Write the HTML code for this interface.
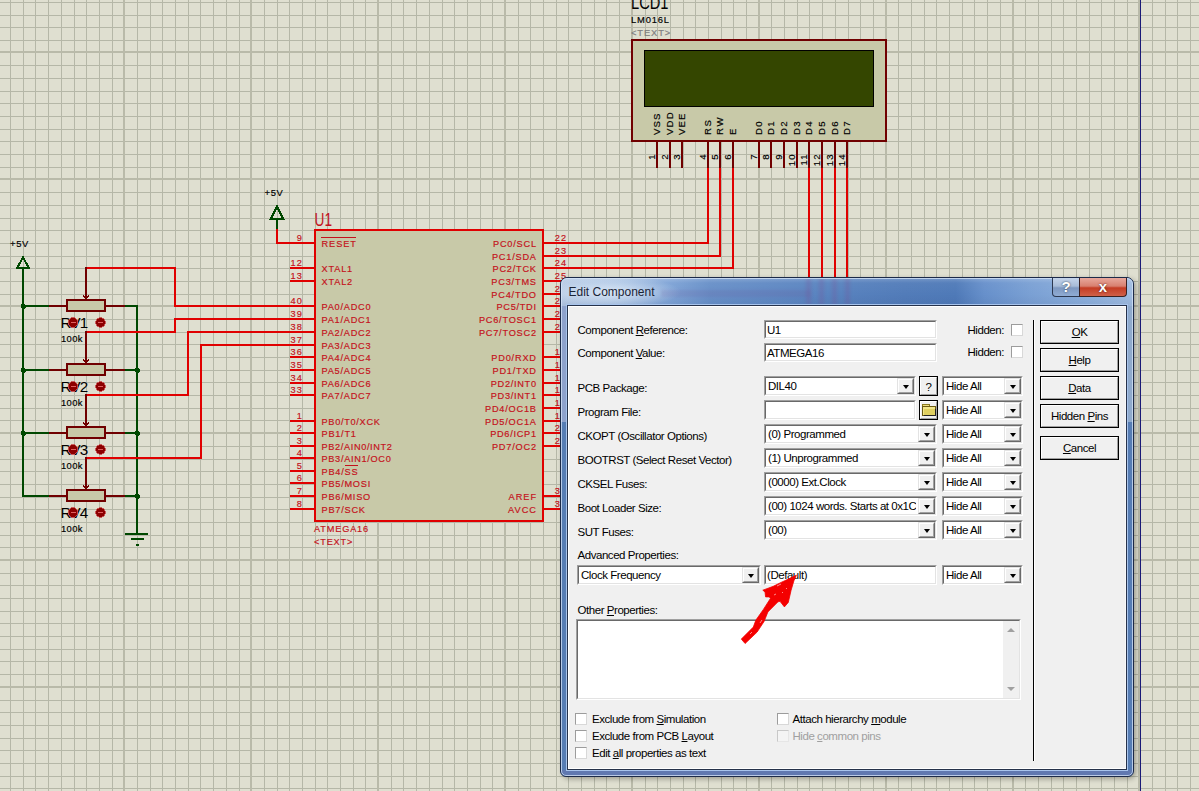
<!DOCTYPE html>
<html><head><meta charset="utf-8"><style>
html,body{margin:0;padding:0;}
body{width:1199px;height:791px;overflow:hidden;position:relative;background:#dfdfd0;font-family:"Liberation Sans",sans-serif;}
u{text-decoration:underline;text-underline-offset:1px;}
</style></head><body>
<svg width="1199" height="791" style="position:absolute;left:0;top:0" shape-rendering="crispEdges" font-family="Liberation Sans, sans-serif">
<g><rect x="10" y="0" width="1" height="791" fill="#b5b7a7"/><rect x="23" y="0" width="1" height="791" fill="#b5b7a7"/><rect x="35" y="0" width="1" height="791" fill="#b5b7a7"/><rect x="48" y="0" width="1" height="791" fill="#b5b7a7"/><rect x="61" y="0" width="1" height="791" fill="#b5b7a7"/><rect x="74" y="0" width="1" height="791" fill="#b5b7a7"/><rect x="86" y="0" width="1" height="791" fill="#b5b7a7"/><rect x="99" y="0" width="1" height="791" fill="#b5b7a7"/><rect x="112" y="0" width="1" height="791" fill="#b5b7a7"/><rect x="137" y="0" width="1" height="791" fill="#b5b7a7"/><rect x="150" y="0" width="1" height="791" fill="#b5b7a7"/><rect x="162" y="0" width="1" height="791" fill="#b5b7a7"/><rect x="175" y="0" width="1" height="791" fill="#b5b7a7"/><rect x="188" y="0" width="1" height="791" fill="#b5b7a7"/><rect x="200" y="0" width="1" height="791" fill="#b5b7a7"/><rect x="213" y="0" width="1" height="791" fill="#b5b7a7"/><rect x="226" y="0" width="1" height="791" fill="#b5b7a7"/><rect x="239" y="0" width="1" height="791" fill="#b5b7a7"/><rect x="264" y="0" width="1" height="791" fill="#b5b7a7"/><rect x="277" y="0" width="1" height="791" fill="#b5b7a7"/><rect x="289" y="0" width="1" height="791" fill="#b5b7a7"/><rect x="302" y="0" width="1" height="791" fill="#b5b7a7"/><rect x="315" y="0" width="1" height="791" fill="#b5b7a7"/><rect x="327" y="0" width="1" height="791" fill="#b5b7a7"/><rect x="340" y="0" width="1" height="791" fill="#b5b7a7"/><rect x="353" y="0" width="1" height="791" fill="#b5b7a7"/><rect x="365" y="0" width="1" height="791" fill="#b5b7a7"/><rect x="391" y="0" width="1" height="791" fill="#b5b7a7"/><rect x="403" y="0" width="1" height="791" fill="#b5b7a7"/><rect x="416" y="0" width="1" height="791" fill="#b5b7a7"/><rect x="429" y="0" width="1" height="791" fill="#b5b7a7"/><rect x="442" y="0" width="1" height="791" fill="#b5b7a7"/><rect x="454" y="0" width="1" height="791" fill="#b5b7a7"/><rect x="467" y="0" width="1" height="791" fill="#b5b7a7"/><rect x="480" y="0" width="1" height="791" fill="#b5b7a7"/><rect x="492" y="0" width="1" height="791" fill="#b5b7a7"/><rect x="518" y="0" width="1" height="791" fill="#b5b7a7"/><rect x="530" y="0" width="1" height="791" fill="#b5b7a7"/><rect x="543" y="0" width="1" height="791" fill="#b5b7a7"/><rect x="556" y="0" width="1" height="791" fill="#b5b7a7"/><rect x="568" y="0" width="1" height="791" fill="#b5b7a7"/><rect x="581" y="0" width="1" height="791" fill="#b5b7a7"/><rect x="594" y="0" width="1" height="791" fill="#b5b7a7"/><rect x="606" y="0" width="1" height="791" fill="#b5b7a7"/><rect x="619" y="0" width="1" height="791" fill="#b5b7a7"/><rect x="645" y="0" width="1" height="791" fill="#b5b7a7"/><rect x="657" y="0" width="1" height="791" fill="#b5b7a7"/><rect x="670" y="0" width="1" height="791" fill="#b5b7a7"/><rect x="683" y="0" width="1" height="791" fill="#b5b7a7"/><rect x="695" y="0" width="1" height="791" fill="#b5b7a7"/><rect x="708" y="0" width="1" height="791" fill="#b5b7a7"/><rect x="721" y="0" width="1" height="791" fill="#b5b7a7"/><rect x="733" y="0" width="1" height="791" fill="#b5b7a7"/><rect x="746" y="0" width="1" height="791" fill="#b5b7a7"/><rect x="771" y="0" width="1" height="791" fill="#b5b7a7"/><rect x="784" y="0" width="1" height="791" fill="#b5b7a7"/><rect x="797" y="0" width="1" height="791" fill="#b5b7a7"/><rect x="809" y="0" width="1" height="791" fill="#b5b7a7"/><rect x="822" y="0" width="1" height="791" fill="#b5b7a7"/><rect x="835" y="0" width="1" height="791" fill="#b5b7a7"/><rect x="848" y="0" width="1" height="791" fill="#b5b7a7"/><rect x="860" y="0" width="1" height="791" fill="#b5b7a7"/><rect x="873" y="0" width="1" height="791" fill="#b5b7a7"/><rect x="898" y="0" width="1" height="791" fill="#b5b7a7"/><rect x="911" y="0" width="1" height="791" fill="#b5b7a7"/><rect x="924" y="0" width="1" height="791" fill="#b5b7a7"/><rect x="936" y="0" width="1" height="791" fill="#b5b7a7"/><rect x="949" y="0" width="1" height="791" fill="#b5b7a7"/><rect x="962" y="0" width="1" height="791" fill="#b5b7a7"/><rect x="974" y="0" width="1" height="791" fill="#b5b7a7"/><rect x="987" y="0" width="1" height="791" fill="#b5b7a7"/><rect x="1000" y="0" width="1" height="791" fill="#b5b7a7"/><rect x="1025" y="0" width="1" height="791" fill="#b5b7a7"/><rect x="1038" y="0" width="1" height="791" fill="#b5b7a7"/><rect x="1051" y="0" width="1" height="791" fill="#b5b7a7"/><rect x="1063" y="0" width="1" height="791" fill="#b5b7a7"/><rect x="1076" y="0" width="1" height="791" fill="#b5b7a7"/><rect x="1089" y="0" width="1" height="791" fill="#b5b7a7"/><rect x="1101" y="0" width="1" height="791" fill="#b5b7a7"/><rect x="1114" y="0" width="1" height="791" fill="#b5b7a7"/><rect x="1127" y="0" width="1" height="791" fill="#b5b7a7"/><rect x="1152" y="0" width="1" height="791" fill="#b5b7a7"/><rect x="1165" y="0" width="1" height="791" fill="#b5b7a7"/><rect x="1177" y="0" width="1" height="791" fill="#b5b7a7"/><rect x="1190" y="0" width="1" height="791" fill="#b5b7a7"/><rect x="0" y="2" width="1199" height="1" fill="#b5b7a7"/><rect x="0" y="15" width="1199" height="1" fill="#b5b7a7"/><rect x="0" y="27" width="1199" height="1" fill="#b5b7a7"/><rect x="0" y="40" width="1199" height="1" fill="#b5b7a7"/><rect x="0" y="65" width="1199" height="1" fill="#b5b7a7"/><rect x="0" y="78" width="1199" height="1" fill="#b5b7a7"/><rect x="0" y="91" width="1199" height="1" fill="#b5b7a7"/><rect x="0" y="103" width="1199" height="1" fill="#b5b7a7"/><rect x="0" y="116" width="1199" height="1" fill="#b5b7a7"/><rect x="0" y="129" width="1199" height="1" fill="#b5b7a7"/><rect x="0" y="141" width="1199" height="1" fill="#b5b7a7"/><rect x="0" y="154" width="1199" height="1" fill="#b5b7a7"/><rect x="0" y="167" width="1199" height="1" fill="#b5b7a7"/><rect x="0" y="192" width="1199" height="1" fill="#b5b7a7"/><rect x="0" y="205" width="1199" height="1" fill="#b5b7a7"/><rect x="0" y="218" width="1199" height="1" fill="#b5b7a7"/><rect x="0" y="230" width="1199" height="1" fill="#b5b7a7"/><rect x="0" y="243" width="1199" height="1" fill="#b5b7a7"/><rect x="0" y="256" width="1199" height="1" fill="#b5b7a7"/><rect x="0" y="268" width="1199" height="1" fill="#b5b7a7"/><rect x="0" y="281" width="1199" height="1" fill="#b5b7a7"/><rect x="0" y="294" width="1199" height="1" fill="#b5b7a7"/><rect x="0" y="319" width="1199" height="1" fill="#b5b7a7"/><rect x="0" y="332" width="1199" height="1" fill="#b5b7a7"/><rect x="0" y="344" width="1199" height="1" fill="#b5b7a7"/><rect x="0" y="357" width="1199" height="1" fill="#b5b7a7"/><rect x="0" y="370" width="1199" height="1" fill="#b5b7a7"/><rect x="0" y="382" width="1199" height="1" fill="#b5b7a7"/><rect x="0" y="395" width="1199" height="1" fill="#b5b7a7"/><rect x="0" y="408" width="1199" height="1" fill="#b5b7a7"/><rect x="0" y="420" width="1199" height="1" fill="#b5b7a7"/><rect x="0" y="446" width="1199" height="1" fill="#b5b7a7"/><rect x="0" y="459" width="1199" height="1" fill="#b5b7a7"/><rect x="0" y="471" width="1199" height="1" fill="#b5b7a7"/><rect x="0" y="484" width="1199" height="1" fill="#b5b7a7"/><rect x="0" y="497" width="1199" height="1" fill="#b5b7a7"/><rect x="0" y="509" width="1199" height="1" fill="#b5b7a7"/><rect x="0" y="522" width="1199" height="1" fill="#b5b7a7"/><rect x="0" y="535" width="1199" height="1" fill="#b5b7a7"/><rect x="0" y="547" width="1199" height="1" fill="#b5b7a7"/><rect x="0" y="573" width="1199" height="1" fill="#b5b7a7"/><rect x="0" y="585" width="1199" height="1" fill="#b5b7a7"/><rect x="0" y="598" width="1199" height="1" fill="#b5b7a7"/><rect x="0" y="611" width="1199" height="1" fill="#b5b7a7"/><rect x="0" y="623" width="1199" height="1" fill="#b5b7a7"/><rect x="0" y="636" width="1199" height="1" fill="#b5b7a7"/><rect x="0" y="649" width="1199" height="1" fill="#b5b7a7"/><rect x="0" y="661" width="1199" height="1" fill="#b5b7a7"/><rect x="0" y="674" width="1199" height="1" fill="#b5b7a7"/><rect x="0" y="700" width="1199" height="1" fill="#b5b7a7"/><rect x="0" y="712" width="1199" height="1" fill="#b5b7a7"/><rect x="0" y="725" width="1199" height="1" fill="#b5b7a7"/><rect x="0" y="738" width="1199" height="1" fill="#b5b7a7"/><rect x="0" y="750" width="1199" height="1" fill="#b5b7a7"/><rect x="0" y="763" width="1199" height="1" fill="#b5b7a7"/><rect x="0" y="776" width="1199" height="1" fill="#b5b7a7"/><rect x="0" y="788" width="1199" height="1" fill="#b5b7a7"/><rect x="123" y="0" width="2" height="791" fill="#b9baa9"/><rect x="250" y="0" width="2" height="791" fill="#b9baa9"/><rect x="377" y="0" width="2" height="791" fill="#b9baa9"/><rect x="504" y="0" width="2" height="791" fill="#b9baa9"/><rect x="631" y="0" width="2" height="791" fill="#b9baa9"/><rect x="758" y="0" width="2" height="791" fill="#b9baa9"/><rect x="885" y="0" width="2" height="791" fill="#b9baa9"/><rect x="1012" y="0" width="2" height="791" fill="#b9baa9"/><rect x="1138" y="0" width="2" height="791" fill="#b9baa9"/><rect x="0" y="51" width="1199" height="2" fill="#b9baa9"/><rect x="0" y="178" width="1199" height="2" fill="#b9baa9"/><rect x="0" y="305" width="1199" height="2" fill="#b9baa9"/><rect x="0" y="432" width="1199" height="2" fill="#b9baa9"/><rect x="0" y="559" width="1199" height="2" fill="#b9baa9"/><rect x="0" y="686" width="1199" height="2" fill="#b9baa9"/></g>
<rect x="1140" y="0" width="1" height="791" fill="#1a1a78" />
<text x="631" y="8.8" font-size="18.5" fill="#000" textLength="37.5" lengthAdjust="spacingAndGlyphs">LCD1</text>
<text x="631" y="22.7" font-size="9.4" fill="#000" stroke="#000" stroke-width="0.18" text-anchor="start" textLength="38.0" lengthAdjust="spacing" font-weight="normal" >LM016L</text>
<text x="631" y="35.8" font-size="9.4" fill="#808080" stroke="#808080" stroke-width="0.18" text-anchor="start" textLength="39.2" lengthAdjust="spacing" font-weight="normal" >&lt;TEXT&gt;</text>
<rect x="631" y="39" width="256" height="103" fill="#700000" />
<rect x="633" y="41" width="252" height="99" fill="#c8c9a8" />
<rect x="644" y="50" width="230" height="57" fill="#000" />
<rect x="645" y="51" width="228" height="55" fill="#344600" />
<rect x="656" y="142" width="2" height="26" fill="#700000" />
<g transform="translate(660,135) rotate(-90)">
<text x="0" y="0" font-size="9.6" fill="#000" stroke="#000" stroke-width="0.18" text-anchor="start" textLength="21.5" lengthAdjust="spacing" font-weight="normal" >VSS</text>
</g>
<g transform="translate(655,154.5) rotate(-90)">
<text x="0" y="0" font-size="9.6" fill="#000" stroke="#000" stroke-width="0.18" text-anchor="end" textLength="5.9" lengthAdjust="spacing" font-weight="normal" >1</text>
</g>
<rect x="669" y="142" width="2" height="26" fill="#700000" />
<g transform="translate(673,135) rotate(-90)">
<text x="0" y="0" font-size="9.6" fill="#000" stroke="#000" stroke-width="0.18" text-anchor="start" textLength="22.7" lengthAdjust="spacing" font-weight="normal" >VDD</text>
</g>
<g transform="translate(668,154.5) rotate(-90)">
<text x="0" y="0" font-size="9.6" fill="#000" stroke="#000" stroke-width="0.18" text-anchor="end" textLength="5.9" lengthAdjust="spacing" font-weight="normal" >2</text>
</g>
<rect x="681" y="142" width="2" height="26" fill="#700000" />
<g transform="translate(685,135) rotate(-90)">
<text x="0" y="0" font-size="9.6" fill="#000" stroke="#000" stroke-width="0.18" text-anchor="start" textLength="21.5" lengthAdjust="spacing" font-weight="normal" >VEE</text>
</g>
<g transform="translate(680,154.5) rotate(-90)">
<text x="0" y="0" font-size="9.6" fill="#000" stroke="#000" stroke-width="0.18" text-anchor="end" textLength="5.9" lengthAdjust="spacing" font-weight="normal" >3</text>
</g>
<rect x="707" y="142" width="2" height="26" fill="#700000" />
<g transform="translate(711,135) rotate(-90)">
<text x="0" y="0" font-size="9.6" fill="#000" stroke="#000" stroke-width="0.18" text-anchor="start" textLength="14.9" lengthAdjust="spacing" font-weight="normal" >RS</text>
</g>
<g transform="translate(706,154.5) rotate(-90)">
<text x="0" y="0" font-size="9.6" fill="#000" stroke="#000" stroke-width="0.18" text-anchor="end" textLength="5.9" lengthAdjust="spacing" font-weight="normal" >4</text>
</g>
<rect x="719" y="142" width="2" height="26" fill="#700000" />
<g transform="translate(723,135) rotate(-90)">
<text x="0" y="0" font-size="9.6" fill="#000" stroke="#000" stroke-width="0.18" text-anchor="start" textLength="17.7" lengthAdjust="spacing" font-weight="normal" >RW</text>
</g>
<g transform="translate(718,154.5) rotate(-90)">
<text x="0" y="0" font-size="9.6" fill="#000" stroke="#000" stroke-width="0.18" text-anchor="end" textLength="5.9" lengthAdjust="spacing" font-weight="normal" >5</text>
</g>
<rect x="732" y="142" width="2" height="26" fill="#700000" />
<g transform="translate(736,135) rotate(-90)">
<text x="0" y="0" font-size="9.6" fill="#000" stroke="#000" stroke-width="0.18" text-anchor="start" textLength="7.2" lengthAdjust="spacing" font-weight="normal" >E</text>
</g>
<g transform="translate(731,154.5) rotate(-90)">
<text x="0" y="0" font-size="9.6" fill="#000" stroke="#000" stroke-width="0.18" text-anchor="end" textLength="5.9" lengthAdjust="spacing" font-weight="normal" >6</text>
</g>
<rect x="758" y="142" width="2" height="26" fill="#700000" />
<g transform="translate(762,135) rotate(-90)">
<text x="0" y="0" font-size="9.6" fill="#000" stroke="#000" stroke-width="0.18" text-anchor="start" textLength="13.7" lengthAdjust="spacing" font-weight="normal" >D0</text>
</g>
<g transform="translate(757,154.5) rotate(-90)">
<text x="0" y="0" font-size="9.6" fill="#000" stroke="#000" stroke-width="0.18" text-anchor="end" textLength="5.9" lengthAdjust="spacing" font-weight="normal" >7</text>
</g>
<rect x="770" y="142" width="2" height="26" fill="#700000" />
<g transform="translate(774,135) rotate(-90)">
<text x="0" y="0" font-size="9.6" fill="#000" stroke="#000" stroke-width="0.18" text-anchor="start" textLength="13.7" lengthAdjust="spacing" font-weight="normal" >D1</text>
</g>
<g transform="translate(769,154.5) rotate(-90)">
<text x="0" y="0" font-size="9.6" fill="#000" stroke="#000" stroke-width="0.18" text-anchor="end" textLength="5.9" lengthAdjust="spacing" font-weight="normal" >8</text>
</g>
<rect x="783" y="142" width="2" height="26" fill="#700000" />
<g transform="translate(787,135) rotate(-90)">
<text x="0" y="0" font-size="9.6" fill="#000" stroke="#000" stroke-width="0.18" text-anchor="start" textLength="13.7" lengthAdjust="spacing" font-weight="normal" >D2</text>
</g>
<g transform="translate(782,154.5) rotate(-90)">
<text x="0" y="0" font-size="9.6" fill="#000" stroke="#000" stroke-width="0.18" text-anchor="end" textLength="5.9" lengthAdjust="spacing" font-weight="normal" >9</text>
</g>
<rect x="796" y="142" width="2" height="26" fill="#700000" />
<g transform="translate(800,135) rotate(-90)">
<text x="0" y="0" font-size="9.6" fill="#000" stroke="#000" stroke-width="0.18" text-anchor="start" textLength="13.7" lengthAdjust="spacing" font-weight="normal" >D3</text>
</g>
<g transform="translate(795,154.5) rotate(-90)">
<text x="0" y="0" font-size="9.6" fill="#000" stroke="#000" stroke-width="0.18" text-anchor="end" textLength="11.7" lengthAdjust="spacing" font-weight="normal" >10</text>
</g>
<rect x="808" y="142" width="2" height="26" fill="#700000" />
<g transform="translate(812,135) rotate(-90)">
<text x="0" y="0" font-size="9.6" fill="#000" stroke="#000" stroke-width="0.18" text-anchor="start" textLength="13.7" lengthAdjust="spacing" font-weight="normal" >D4</text>
</g>
<g transform="translate(807,154.5) rotate(-90)">
<text x="0" y="0" font-size="9.6" fill="#000" stroke="#000" stroke-width="0.18" text-anchor="end" textLength="11.0" lengthAdjust="spacing" font-weight="normal" >11</text>
</g>
<rect x="821" y="142" width="2" height="26" fill="#700000" />
<g transform="translate(825,135) rotate(-90)">
<text x="0" y="0" font-size="9.6" fill="#000" stroke="#000" stroke-width="0.18" text-anchor="start" textLength="13.7" lengthAdjust="spacing" font-weight="normal" >D5</text>
</g>
<g transform="translate(820,154.5) rotate(-90)">
<text x="0" y="0" font-size="9.6" fill="#000" stroke="#000" stroke-width="0.18" text-anchor="end" textLength="11.7" lengthAdjust="spacing" font-weight="normal" >12</text>
</g>
<rect x="834" y="142" width="2" height="26" fill="#700000" />
<g transform="translate(838,135) rotate(-90)">
<text x="0" y="0" font-size="9.6" fill="#000" stroke="#000" stroke-width="0.18" text-anchor="start" textLength="13.7" lengthAdjust="spacing" font-weight="normal" >D6</text>
</g>
<g transform="translate(833,154.5) rotate(-90)">
<text x="0" y="0" font-size="9.6" fill="#000" stroke="#000" stroke-width="0.18" text-anchor="end" textLength="11.7" lengthAdjust="spacing" font-weight="normal" >13</text>
</g>
<rect x="846" y="142" width="2" height="26" fill="#700000" />
<g transform="translate(850,135) rotate(-90)">
<text x="0" y="0" font-size="9.6" fill="#000" stroke="#000" stroke-width="0.18" text-anchor="start" textLength="13.7" lengthAdjust="spacing" font-weight="normal" >D7</text>
</g>
<g transform="translate(845,154.5) rotate(-90)">
<text x="0" y="0" font-size="9.6" fill="#000" stroke="#000" stroke-width="0.18" text-anchor="end" textLength="11.7" lengthAdjust="spacing" font-weight="normal" >14</text>
</g>
<rect x="543" y="242" width="166" height="2" fill="#e00000" />
<rect x="707" y="168" width="2" height="76" fill="#e00000" />
<rect x="543" y="255" width="178" height="2" fill="#e00000" />
<rect x="719" y="168" width="2" height="89" fill="#e00000" />
<rect x="543" y="267" width="191" height="2" fill="#e00000" />
<rect x="732" y="168" width="2" height="101" fill="#e00000" />
<rect x="808" y="168" width="2" height="132" fill="#e00000" />
<rect x="821" y="168" width="2" height="132" fill="#e00000" />
<rect x="834" y="168" width="2" height="132" fill="#e00000" />
<rect x="846" y="168" width="2" height="132" fill="#e00000" />
<rect x="314" y="229" width="230" height="293" fill="#e00000" />
<rect x="316" y="231" width="226" height="289" fill="#c8c9a8" />
<text x="314.5" y="226" font-size="17.5" fill="#c4121c" textLength="17.5" lengthAdjust="spacingAndGlyphs">U1</text>
<text x="301.8" y="240.5" font-size="9.2" fill="#c4121c" stroke="#c4121c" stroke-width="0.18" text-anchor="end" textLength="5.6" lengthAdjust="spacing" font-weight="normal" >9</text>
<text x="321.5" y="246.6" font-size="9.2" fill="#c4121c" stroke="#c4121c" stroke-width="0.18" text-anchor="start" textLength="34.4" lengthAdjust="spacing" font-weight="normal" >RESET</text>
<rect x="290" y="267" width="24" height="2" fill="#e00000" />
<text x="301.8" y="265.5" font-size="9.2" fill="#c4121c" stroke="#c4121c" stroke-width="0.18" text-anchor="end" textLength="11.3" lengthAdjust="spacing" font-weight="normal" >12</text>
<text x="321.5" y="271.6" font-size="9.2" fill="#c4121c" stroke="#c4121c" stroke-width="0.18" text-anchor="start" textLength="30.7" lengthAdjust="spacing" font-weight="normal" >XTAL1</text>
<rect x="290" y="280" width="24" height="2" fill="#e00000" />
<text x="301.8" y="278.5" font-size="9.2" fill="#c4121c" stroke="#c4121c" stroke-width="0.18" text-anchor="end" textLength="11.3" lengthAdjust="spacing" font-weight="normal" >13</text>
<text x="321.5" y="284.6" font-size="9.2" fill="#c4121c" stroke="#c4121c" stroke-width="0.18" text-anchor="start" textLength="30.7" lengthAdjust="spacing" font-weight="normal" >XTAL2</text>
<rect x="290" y="305" width="24" height="2" fill="#e00000" />
<text x="301.8" y="303.5" font-size="9.2" fill="#c4121c" stroke="#c4121c" stroke-width="0.18" text-anchor="end" textLength="11.3" lengthAdjust="spacing" font-weight="normal" >40</text>
<text x="321.5" y="309.6" font-size="9.2" fill="#c4121c" stroke="#c4121c" stroke-width="0.18" text-anchor="start" textLength="49.1" lengthAdjust="spacing" font-weight="normal" >PA0/ADC0</text>
<rect x="290" y="318" width="24" height="2" fill="#e00000" />
<text x="301.8" y="316.5" font-size="9.2" fill="#c4121c" stroke="#c4121c" stroke-width="0.18" text-anchor="end" textLength="11.3" lengthAdjust="spacing" font-weight="normal" >39</text>
<text x="321.5" y="322.6" font-size="9.2" fill="#c4121c" stroke="#c4121c" stroke-width="0.18" text-anchor="start" textLength="49.1" lengthAdjust="spacing" font-weight="normal" >PA1/ADC1</text>
<rect x="290" y="331" width="24" height="2" fill="#e00000" />
<text x="301.8" y="329.5" font-size="9.2" fill="#c4121c" stroke="#c4121c" stroke-width="0.18" text-anchor="end" textLength="11.3" lengthAdjust="spacing" font-weight="normal" >38</text>
<text x="321.5" y="335.6" font-size="9.2" fill="#c4121c" stroke="#c4121c" stroke-width="0.18" text-anchor="start" textLength="49.1" lengthAdjust="spacing" font-weight="normal" >PA2/ADC2</text>
<rect x="290" y="344" width="24" height="2" fill="#e00000" />
<text x="301.8" y="342.5" font-size="9.2" fill="#c4121c" stroke="#c4121c" stroke-width="0.18" text-anchor="end" textLength="11.3" lengthAdjust="spacing" font-weight="normal" >37</text>
<text x="321.5" y="348.6" font-size="9.2" fill="#c4121c" stroke="#c4121c" stroke-width="0.18" text-anchor="start" textLength="49.1" lengthAdjust="spacing" font-weight="normal" >PA3/ADC3</text>
<rect x="290" y="356" width="24" height="2" fill="#e00000" />
<text x="301.8" y="354.5" font-size="9.2" fill="#c4121c" stroke="#c4121c" stroke-width="0.18" text-anchor="end" textLength="11.3" lengthAdjust="spacing" font-weight="normal" >36</text>
<text x="321.5" y="360.6" font-size="9.2" fill="#c4121c" stroke="#c4121c" stroke-width="0.18" text-anchor="start" textLength="49.1" lengthAdjust="spacing" font-weight="normal" >PA4/ADC4</text>
<rect x="290" y="369" width="24" height="2" fill="#e00000" />
<text x="301.8" y="367.5" font-size="9.2" fill="#c4121c" stroke="#c4121c" stroke-width="0.18" text-anchor="end" textLength="11.3" lengthAdjust="spacing" font-weight="normal" >35</text>
<text x="321.5" y="373.6" font-size="9.2" fill="#c4121c" stroke="#c4121c" stroke-width="0.18" text-anchor="start" textLength="49.1" lengthAdjust="spacing" font-weight="normal" >PA5/ADC5</text>
<rect x="290" y="382" width="24" height="2" fill="#e00000" />
<text x="301.8" y="380.5" font-size="9.2" fill="#c4121c" stroke="#c4121c" stroke-width="0.18" text-anchor="end" textLength="11.3" lengthAdjust="spacing" font-weight="normal" >34</text>
<text x="321.5" y="386.6" font-size="9.2" fill="#c4121c" stroke="#c4121c" stroke-width="0.18" text-anchor="start" textLength="49.1" lengthAdjust="spacing" font-weight="normal" >PA6/ADC6</text>
<rect x="290" y="394" width="24" height="2" fill="#e00000" />
<text x="301.8" y="392.5" font-size="9.2" fill="#c4121c" stroke="#c4121c" stroke-width="0.18" text-anchor="end" textLength="11.3" lengthAdjust="spacing" font-weight="normal" >33</text>
<text x="321.5" y="398.6" font-size="9.2" fill="#c4121c" stroke="#c4121c" stroke-width="0.18" text-anchor="start" textLength="49.1" lengthAdjust="spacing" font-weight="normal" >PA7/ADC7</text>
<rect x="290" y="420" width="24" height="2" fill="#e00000" />
<text x="301.8" y="418.5" font-size="9.2" fill="#c4121c" stroke="#c4121c" stroke-width="0.18" text-anchor="end" textLength="5.6" lengthAdjust="spacing" font-weight="normal" >1</text>
<text x="321.5" y="424.6" font-size="9.2" fill="#c4121c" stroke="#c4121c" stroke-width="0.18" text-anchor="start" textLength="58.4" lengthAdjust="spacing" font-weight="normal" >PB0/T0/XCK</text>
<rect x="290" y="432" width="24" height="2" fill="#e00000" />
<text x="301.8" y="430.5" font-size="9.2" fill="#c4121c" stroke="#c4121c" stroke-width="0.18" text-anchor="end" textLength="5.6" lengthAdjust="spacing" font-weight="normal" >2</text>
<text x="321.5" y="436.6" font-size="9.2" fill="#c4121c" stroke="#c4121c" stroke-width="0.18" text-anchor="start" textLength="34.4" lengthAdjust="spacing" font-weight="normal" >PB1/T1</text>
<rect x="290" y="445" width="24" height="2" fill="#e00000" />
<text x="301.8" y="443.5" font-size="9.2" fill="#c4121c" stroke="#c4121c" stroke-width="0.18" text-anchor="end" textLength="5.6" lengthAdjust="spacing" font-weight="normal" >3</text>
<text x="321.5" y="449.6" font-size="9.2" fill="#c4121c" stroke="#c4121c" stroke-width="0.18" text-anchor="start" textLength="70.4" lengthAdjust="spacing" font-weight="normal" >PB2/AIN0/INT2</text>
<rect x="290" y="457" width="24" height="2" fill="#e00000" />
<text x="301.8" y="455.5" font-size="9.2" fill="#c4121c" stroke="#c4121c" stroke-width="0.18" text-anchor="end" textLength="5.6" lengthAdjust="spacing" font-weight="normal" >4</text>
<text x="321.5" y="461.6" font-size="9.2" fill="#c4121c" stroke="#c4121c" stroke-width="0.18" text-anchor="start" textLength="69.3" lengthAdjust="spacing" font-weight="normal" >PB3/AIN1/OC0</text>
<rect x="290" y="470" width="24" height="2" fill="#e00000" />
<text x="301.8" y="468.5" font-size="9.2" fill="#c4121c" stroke="#c4121c" stroke-width="0.18" text-anchor="end" textLength="5.6" lengthAdjust="spacing" font-weight="normal" >5</text>
<text x="321.5" y="474.6" font-size="9.2" fill="#c4121c" stroke="#c4121c" stroke-width="0.18" text-anchor="start" textLength="36.1" lengthAdjust="spacing" font-weight="normal" >PB4/SS</text>
<rect x="290" y="482" width="24" height="2" fill="#e00000" />
<text x="301.8" y="480.5" font-size="9.2" fill="#c4121c" stroke="#c4121c" stroke-width="0.18" text-anchor="end" textLength="5.6" lengthAdjust="spacing" font-weight="normal" >6</text>
<text x="321.5" y="486.6" font-size="9.2" fill="#c4121c" stroke="#c4121c" stroke-width="0.18" text-anchor="start" textLength="48.7" lengthAdjust="spacing" font-weight="normal" >PB5/MOSI</text>
<rect x="290" y="495" width="24" height="2" fill="#e00000" />
<text x="301.8" y="493.5" font-size="9.2" fill="#c4121c" stroke="#c4121c" stroke-width="0.18" text-anchor="end" textLength="5.6" lengthAdjust="spacing" font-weight="normal" >7</text>
<text x="321.5" y="499.6" font-size="9.2" fill="#c4121c" stroke="#c4121c" stroke-width="0.18" text-anchor="start" textLength="48.7" lengthAdjust="spacing" font-weight="normal" >PB6/MISO</text>
<rect x="290" y="508" width="24" height="2" fill="#e00000" />
<text x="301.8" y="506.5" font-size="9.2" fill="#c4121c" stroke="#c4121c" stroke-width="0.18" text-anchor="end" textLength="5.6" lengthAdjust="spacing" font-weight="normal" >8</text>
<text x="321.5" y="512.6" font-size="9.2" fill="#c4121c" stroke="#c4121c" stroke-width="0.18" text-anchor="start" textLength="43.5" lengthAdjust="spacing" font-weight="normal" >PB7/SCK</text>
<rect x="321" y="237" width="35" height="1" fill="#c4121c" />
<rect x="345" y="465" width="13" height="1" fill="#c4121c" />
<rect x="543" y="242" width="27" height="2" fill="#e00000" />
<text x="554.7" y="240.5" font-size="9.2" fill="#c4121c" stroke="#c4121c" stroke-width="0.18" text-anchor="start" textLength="11.3" lengthAdjust="spacing" font-weight="normal" >22</text>
<text x="536" y="246.6" font-size="9.2" fill="#c4121c" stroke="#c4121c" stroke-width="0.18" text-anchor="end" textLength="43.0" lengthAdjust="spacing" font-weight="normal" >PC0/SCL</text>
<rect x="543" y="255" width="27" height="2" fill="#e00000" />
<text x="554.7" y="253.5" font-size="9.2" fill="#c4121c" stroke="#c4121c" stroke-width="0.18" text-anchor="start" textLength="11.3" lengthAdjust="spacing" font-weight="normal" >23</text>
<text x="536" y="259.6" font-size="9.2" fill="#c4121c" stroke="#c4121c" stroke-width="0.18" text-anchor="end" textLength="44.1" lengthAdjust="spacing" font-weight="normal" >PC1/SDA</text>
<rect x="543" y="267" width="27" height="2" fill="#e00000" />
<text x="554.7" y="265.5" font-size="9.2" fill="#c4121c" stroke="#c4121c" stroke-width="0.18" text-anchor="start" textLength="11.3" lengthAdjust="spacing" font-weight="normal" >24</text>
<text x="536" y="271.6" font-size="9.2" fill="#c4121c" stroke="#c4121c" stroke-width="0.18" text-anchor="end" textLength="43.5" lengthAdjust="spacing" font-weight="normal" >PC2/TCK</text>
<rect x="543" y="280" width="27" height="2" fill="#e00000" />
<text x="554.7" y="278.5" font-size="9.2" fill="#c4121c" stroke="#c4121c" stroke-width="0.18" text-anchor="start" textLength="11.3" lengthAdjust="spacing" font-weight="normal" >25</text>
<text x="536" y="284.6" font-size="9.2" fill="#c4121c" stroke="#c4121c" stroke-width="0.18" text-anchor="end" textLength="44.7" lengthAdjust="spacing" font-weight="normal" >PC3/TMS</text>
<rect x="543" y="293" width="27" height="2" fill="#e00000" />
<text x="554.7" y="291.5" font-size="9.2" fill="#c4121c" stroke="#c4121c" stroke-width="0.18" text-anchor="start" textLength="11.3" lengthAdjust="spacing" font-weight="normal" >26</text>
<text x="536" y="297.6" font-size="9.2" fill="#c4121c" stroke="#c4121c" stroke-width="0.18" text-anchor="end" textLength="44.7" lengthAdjust="spacing" font-weight="normal" >PC4/TDO</text>
<rect x="543" y="305" width="27" height="2" fill="#e00000" />
<text x="554.7" y="303.5" font-size="9.2" fill="#c4121c" stroke="#c4121c" stroke-width="0.18" text-anchor="start" textLength="11.3" lengthAdjust="spacing" font-weight="normal" >27</text>
<text x="536" y="309.6" font-size="9.2" fill="#c4121c" stroke="#c4121c" stroke-width="0.18" text-anchor="end" textLength="39.5" lengthAdjust="spacing" font-weight="normal" >PC5/TDI</text>
<rect x="543" y="318" width="27" height="2" fill="#e00000" />
<text x="554.7" y="316.5" font-size="9.2" fill="#c4121c" stroke="#c4121c" stroke-width="0.18" text-anchor="start" textLength="11.3" lengthAdjust="spacing" font-weight="normal" >28</text>
<text x="536" y="322.6" font-size="9.2" fill="#c4121c" stroke="#c4121c" stroke-width="0.18" text-anchor="end" textLength="57.1" lengthAdjust="spacing" font-weight="normal" >PC6/TOSC1</text>
<rect x="543" y="331" width="27" height="2" fill="#e00000" />
<text x="554.7" y="329.5" font-size="9.2" fill="#c4121c" stroke="#c4121c" stroke-width="0.18" text-anchor="start" textLength="11.3" lengthAdjust="spacing" font-weight="normal" >29</text>
<text x="536" y="335.6" font-size="9.2" fill="#c4121c" stroke="#c4121c" stroke-width="0.18" text-anchor="end" textLength="57.1" lengthAdjust="spacing" font-weight="normal" >PC7/TOSC2</text>
<rect x="543" y="356" width="27" height="2" fill="#e00000" />
<text x="554.7" y="354.5" font-size="9.2" fill="#c4121c" stroke="#c4121c" stroke-width="0.18" text-anchor="start" textLength="11.3" lengthAdjust="spacing" font-weight="normal" >14</text>
<text x="536" y="360.6" font-size="9.2" fill="#c4121c" stroke="#c4121c" stroke-width="0.18" text-anchor="end" textLength="44.7" lengthAdjust="spacing" font-weight="normal" >PD0/RXD</text>
<rect x="543" y="369" width="27" height="2" fill="#e00000" />
<text x="554.7" y="367.5" font-size="9.2" fill="#c4121c" stroke="#c4121c" stroke-width="0.18" text-anchor="start" textLength="11.3" lengthAdjust="spacing" font-weight="normal" >15</text>
<text x="536" y="373.6" font-size="9.2" fill="#c4121c" stroke="#c4121c" stroke-width="0.18" text-anchor="end" textLength="43.5" lengthAdjust="spacing" font-weight="normal" >PD1/TXD</text>
<rect x="543" y="382" width="27" height="2" fill="#e00000" />
<text x="554.7" y="380.5" font-size="9.2" fill="#c4121c" stroke="#c4121c" stroke-width="0.18" text-anchor="start" textLength="11.3" lengthAdjust="spacing" font-weight="normal" >16</text>
<text x="536" y="386.6" font-size="9.2" fill="#c4121c" stroke="#c4121c" stroke-width="0.18" text-anchor="end" textLength="45.2" lengthAdjust="spacing" font-weight="normal" >PD2/INT0</text>
<rect x="543" y="394" width="27" height="2" fill="#e00000" />
<text x="554.7" y="392.5" font-size="9.2" fill="#c4121c" stroke="#c4121c" stroke-width="0.18" text-anchor="start" textLength="11.3" lengthAdjust="spacing" font-weight="normal" >17</text>
<text x="536" y="398.6" font-size="9.2" fill="#c4121c" stroke="#c4121c" stroke-width="0.18" text-anchor="end" textLength="45.2" lengthAdjust="spacing" font-weight="normal" >PD3/INT1</text>
<rect x="543" y="407" width="27" height="2" fill="#e00000" />
<text x="554.7" y="405.5" font-size="9.2" fill="#c4121c" stroke="#c4121c" stroke-width="0.18" text-anchor="start" textLength="11.3" lengthAdjust="spacing" font-weight="normal" >18</text>
<text x="536" y="411.6" font-size="9.2" fill="#c4121c" stroke="#c4121c" stroke-width="0.18" text-anchor="end" textLength="51.0" lengthAdjust="spacing" font-weight="normal" >PD4/OC1B</text>
<rect x="543" y="420" width="27" height="2" fill="#e00000" />
<text x="554.7" y="418.5" font-size="9.2" fill="#c4121c" stroke="#c4121c" stroke-width="0.18" text-anchor="start" textLength="11.3" lengthAdjust="spacing" font-weight="normal" >19</text>
<text x="536" y="424.6" font-size="9.2" fill="#c4121c" stroke="#c4121c" stroke-width="0.18" text-anchor="end" textLength="51.0" lengthAdjust="spacing" font-weight="normal" >PD5/OC1A</text>
<rect x="543" y="432" width="27" height="2" fill="#e00000" />
<text x="554.7" y="430.5" font-size="9.2" fill="#c4121c" stroke="#c4121c" stroke-width="0.18" text-anchor="start" textLength="11.3" lengthAdjust="spacing" font-weight="normal" >20</text>
<text x="536" y="436.6" font-size="9.2" fill="#c4121c" stroke="#c4121c" stroke-width="0.18" text-anchor="end" textLength="45.8" lengthAdjust="spacing" font-weight="normal" >PD6/ICP1</text>
<rect x="543" y="445" width="27" height="2" fill="#e00000" />
<text x="554.7" y="443.5" font-size="9.2" fill="#c4121c" stroke="#c4121c" stroke-width="0.18" text-anchor="start" textLength="11.3" lengthAdjust="spacing" font-weight="normal" >21</text>
<text x="536" y="449.6" font-size="9.2" fill="#c4121c" stroke="#c4121c" stroke-width="0.18" text-anchor="end" textLength="44.1" lengthAdjust="spacing" font-weight="normal" >PD7/OC2</text>
<rect x="543" y="495" width="27" height="2" fill="#e00000" />
<text x="554.7" y="493.5" font-size="9.2" fill="#c4121c" stroke="#c4121c" stroke-width="0.18" text-anchor="start" textLength="11.3" lengthAdjust="spacing" font-weight="normal" >32</text>
<text x="536" y="499.6" font-size="9.2" fill="#c4121c" stroke="#c4121c" stroke-width="0.18" text-anchor="end" textLength="27.5" lengthAdjust="spacing" font-weight="normal" >AREF</text>
<rect x="543" y="508" width="27" height="2" fill="#e00000" />
<text x="554.7" y="506.5" font-size="9.2" fill="#c4121c" stroke="#c4121c" stroke-width="0.18" text-anchor="start" textLength="11.3" lengthAdjust="spacing" font-weight="normal" >30</text>
<text x="536" y="512.6" font-size="9.2" fill="#c4121c" stroke="#c4121c" stroke-width="0.18" text-anchor="end" textLength="27.9" lengthAdjust="spacing" font-weight="normal" >AVCC</text>
<text x="314" y="531.8" font-size="9.2" fill="#c4121c" stroke="#c4121c" stroke-width="0.18" text-anchor="start" textLength="54.2" lengthAdjust="spacing" font-weight="normal" >ATMEGA16</text>
<text x="314" y="544.6" font-size="9.2" fill="#c4121c" stroke="#c4121c" stroke-width="0.18" text-anchor="start" textLength="38.4" lengthAdjust="spacing" font-weight="normal" >&lt;TEXT&gt;</text>
<polygon points="23,257.5 17,268 29,268" fill="none" stroke="#004800" stroke-width="2"/>
<text x="10" y="247.2" font-size="9.4" fill="#000" stroke="#000" stroke-width="0.18" text-anchor="start" textLength="18.3" lengthAdjust="spacing" font-weight="normal" >+5V</text>
<rect x="22" y="268" width="2" height="229" fill="#004800" />
<polygon points="277,206.5 271,218.5 283,218.5" fill="none" stroke="#004800" stroke-width="2"/>
<text x="264.5" y="195.8" font-size="9.4" fill="#000" stroke="#000" stroke-width="0.18" text-anchor="start" textLength="18.3" lengthAdjust="spacing" font-weight="normal" >+5V</text>
<rect x="276" y="218" width="2" height="12" fill="#004800" />
<rect x="276" y="229" width="2" height="15" fill="#e00000" />
<rect x="276" y="242" width="38" height="2" fill="#e00000" />
<rect x="22" y="305" width="27" height="2" fill="#004800" />
<rect x="49" y="305" width="18" height="2" fill="#700000" />
<rect x="66" y="299" width="40" height="13" fill="#700000" />
<rect x="68" y="301" width="36" height="9" fill="#c8c9a8" />
<rect x="105" y="305" width="20" height="2" fill="#700000" />
<rect x="125" y="305" width="13" height="2" fill="#004800" />
<text x="60.5" y="327.7" font-size="15.2" fill="#000" stroke="#000" stroke-width="0" text-anchor="start" textLength="27.8" lengthAdjust="spacing" font-weight="normal" >RV1</text>
<circle cx="73" cy="322.5" r="4.8" fill="#8c0000" stroke="#c85050" stroke-width="0.9"/>
<rect x="70.5" y="322" width="5.0" height="1" fill="#e06060" />
<circle cx="100.5" cy="322.5" r="4.8" fill="#8c0000" stroke="#c85050" stroke-width="0.9"/>
<rect x="98.0" y="322" width="5.0" height="1" fill="#e06060" />
<text x="61" y="342.2" font-size="9.4" fill="#000" stroke="#000" stroke-width="0.18" text-anchor="start" textLength="21.4" lengthAdjust="spacing" font-weight="normal" >100k</text>
<rect x="22" y="369" width="27" height="2" fill="#004800" />
<rect x="49" y="369" width="18" height="2" fill="#700000" />
<rect x="66" y="363" width="40" height="13" fill="#700000" />
<rect x="68" y="365" width="36" height="9" fill="#c8c9a8" />
<rect x="105" y="369" width="20" height="2" fill="#700000" />
<rect x="125" y="369" width="13" height="2" fill="#004800" />
<text x="60.5" y="391.7" font-size="15.2" fill="#000" stroke="#000" stroke-width="0" text-anchor="start" textLength="27.8" lengthAdjust="spacing" font-weight="normal" >RV2</text>
<circle cx="73" cy="386.5" r="4.8" fill="#8c0000" stroke="#c85050" stroke-width="0.9"/>
<rect x="70.5" y="386" width="5.0" height="1" fill="#e06060" />
<circle cx="100.5" cy="386.5" r="4.8" fill="#8c0000" stroke="#c85050" stroke-width="0.9"/>
<rect x="98.0" y="386" width="5.0" height="1" fill="#e06060" />
<text x="61" y="406.2" font-size="9.4" fill="#000" stroke="#000" stroke-width="0.18" text-anchor="start" textLength="21.4" lengthAdjust="spacing" font-weight="normal" >100k</text>
<rect x="22" y="432" width="27" height="2" fill="#004800" />
<rect x="49" y="432" width="18" height="2" fill="#700000" />
<rect x="66" y="426" width="40" height="13" fill="#700000" />
<rect x="68" y="428" width="36" height="9" fill="#c8c9a8" />
<rect x="105" y="432" width="20" height="2" fill="#700000" />
<rect x="125" y="432" width="13" height="2" fill="#004800" />
<text x="60.5" y="454.7" font-size="15.2" fill="#000" stroke="#000" stroke-width="0" text-anchor="start" textLength="27.8" lengthAdjust="spacing" font-weight="normal" >RV3</text>
<circle cx="73" cy="449.5" r="4.8" fill="#8c0000" stroke="#c85050" stroke-width="0.9"/>
<rect x="70.5" y="449" width="5.0" height="1" fill="#e06060" />
<circle cx="100.5" cy="449.5" r="4.8" fill="#8c0000" stroke="#c85050" stroke-width="0.9"/>
<rect x="98.0" y="449" width="5.0" height="1" fill="#e06060" />
<text x="61" y="469.2" font-size="9.4" fill="#000" stroke="#000" stroke-width="0.18" text-anchor="start" textLength="21.4" lengthAdjust="spacing" font-weight="normal" >100k</text>
<rect x="22" y="495" width="27" height="2" fill="#004800" />
<rect x="49" y="495" width="18" height="2" fill="#700000" />
<rect x="66" y="489" width="40" height="13" fill="#700000" />
<rect x="68" y="491" width="36" height="9" fill="#c8c9a8" />
<rect x="105" y="495" width="20" height="2" fill="#700000" />
<rect x="125" y="495" width="13" height="2" fill="#004800" />
<text x="60.5" y="517.7" font-size="15.2" fill="#000" stroke="#000" stroke-width="0" text-anchor="start" textLength="27.8" lengthAdjust="spacing" font-weight="normal" >RV4</text>
<circle cx="73" cy="512.5" r="4.8" fill="#8c0000" stroke="#c85050" stroke-width="0.9"/>
<rect x="70.5" y="512" width="5.0" height="1" fill="#e06060" />
<circle cx="100.5" cy="512.5" r="4.8" fill="#8c0000" stroke="#c85050" stroke-width="0.9"/>
<rect x="98.0" y="512" width="5.0" height="1" fill="#e06060" />
<text x="61" y="532.2" font-size="9.4" fill="#000" stroke="#000" stroke-width="0.18" text-anchor="start" textLength="21.4" lengthAdjust="spacing" font-weight="normal" >100k</text>
<rect x="136" y="305" width="2" height="230" fill="#004800" />
<rect x="20.5" y="303.5" width="5" height="5" rx="1" fill="#004800"/>
<rect x="20.5" y="367.5" width="5" height="5" rx="1" fill="#004800"/>
<rect x="20.5" y="430.5" width="5" height="5" rx="1" fill="#004800"/>
<rect x="134.5" y="367.5" width="5" height="5" rx="1" fill="#004800"/>
<rect x="134.5" y="430.5" width="5" height="5" rx="1" fill="#004800"/>
<rect x="134.5" y="493.5" width="5" height="5" rx="1" fill="#004800"/>
<rect x="125" y="533" width="23" height="2" fill="#004800" />
<rect x="131" y="538" width="13" height="2" fill="#004800" />
<rect x="136" y="544" width="3" height="2" fill="#004800" />
<rect x="86" y="267" width="90" height="2" fill="#e00000" />
<rect x="174" y="267" width="2" height="40" fill="#e00000" />
<rect x="174" y="305" width="140" height="2" fill="#e00000" />
<rect x="85" y="267" width="2" height="32" fill="#700000" />
<polyline points="83,295.5 86,299 89,295.5" fill="none" stroke="#700000" stroke-width="1.6"/>
<rect x="86" y="331" width="90" height="2" fill="#e00000" />
<rect x="174" y="318" width="2" height="15" fill="#e00000" />
<rect x="174" y="318" width="140" height="2" fill="#e00000" />
<rect x="85" y="331" width="2" height="32" fill="#700000" />
<polyline points="83,359.5 86,363 89,359.5" fill="none" stroke="#700000" stroke-width="1.6"/>
<rect x="86" y="394" width="103" height="2" fill="#e00000" />
<rect x="187" y="331" width="2" height="65" fill="#e00000" />
<rect x="187" y="331" width="127" height="2" fill="#e00000" />
<rect x="85" y="394" width="2" height="32" fill="#700000" />
<polyline points="83,422.5 86,426 89,422.5" fill="none" stroke="#700000" stroke-width="1.6"/>
<rect x="86" y="457" width="116" height="2" fill="#e00000" />
<rect x="200" y="344" width="2" height="115" fill="#e00000" />
<rect x="200" y="344" width="114" height="2" fill="#e00000" />
<rect x="85" y="457" width="2" height="32" fill="#700000" />
<polyline points="83,485.5 86,489 89,485.5" fill="none" stroke="#700000" stroke-width="1.6"/>
</svg>
<div style="position:absolute;left:560px;top:277px;width:574px;height:500px;border-radius:7px;box-shadow:2px 2px 5px 0px rgba(20,20,10,0.32);"></div>
<div style="position:absolute;left:560px;top:277px;width:574px;height:500px;box-sizing:border-box;border:1px solid #1c2a48;border-radius:7px 7px 6px 6px;background:#567db4;overflow:hidden;"><div style="position:absolute;left:0;top:0;width:572px;height:28px;background:linear-gradient(90deg,#b4c8e4 0%,#a0bce0 10%,#7ea3d6 19%,#6890c8 26%,#5a84c0 45%,#527cb9 60%,#4f7ab8 69%,#6790cb 74%,#7aa0d4 82%,#8cafdc 92%,#a0bce0 100%);"></div><div style="position:absolute;left:0;top:0;width:572px;height:28px;background:linear-gradient(180deg,rgba(255,255,255,0.22) 0,rgba(255,255,255,0.04) 5px,rgba(0,20,60,0) 16px,rgba(0,20,60,0.06) 28px);"></div><div style="position:absolute;left:-10px;top:0px;width:140px;height:28px;background:radial-gradient(ellipse 70px 16px at 60px 14px,rgba(225,236,248,0.85),rgba(225,236,248,0) 100%);"></div><div style="position:absolute;left:100px;top:12px;width:150px;height:7px;background:rgba(110,80,150,0.16);filter:blur(1.5px);"></div><div style="position:absolute;left:245px;top:0px;width:5px;height:28px;background:rgba(130,70,140,0.2);filter:blur(1.5px);"></div><div style="position:absolute;left:258px;top:0px;width:5px;height:28px;background:rgba(130,70,140,0.2);filter:blur(1.5px);"></div><div style="position:absolute;left:271px;top:0px;width:5px;height:28px;background:rgba(130,70,140,0.2);filter:blur(1.5px);"></div><div style="position:absolute;left:284px;top:0px;width:5px;height:28px;background:rgba(130,70,140,0.2);filter:blur(1.5px);"></div><div style="position:absolute;left:0;top:28px;width:6px;height:116px;background:#8ea2cc;"></div><div style="position:absolute;left:566px;top:28px;width:6px;height:116px;background:#8faacc;"></div><div style="position:absolute;left:0;top:492px;width:572px;height:6px;background:#6078b0;"></div><div style="position:absolute;left:0;top:0;right:0;bottom:0;border:1px solid rgba(215,230,250,0.75);border-radius:6px 6px 5px 5px;"></div></div>
<div style="position:absolute;left:568.5px;top:285.74px;font-size:12px;line-height:13.48px;color:#1a2436;white-space:nowrap;letter-spacing:0.000px;">Edit Component</div>
<div style="position:absolute;left:1052px;top:278px;width:28px;height:19px;box-sizing:border-box;border:1px solid #2c3850;border-top:none;border-radius:0 0 0 4px;background:linear-gradient(180deg,#c4d4ea 0%,#a8bcd8 45%,#7e98c0 55%,#90acd4 100%);"></div>
<div style="position:absolute;left:1079px;top:278px;width:48px;height:19px;box-sizing:border-box;border:1px solid #3a2020;border-top:none;border-radius:0 0 4px 0;background:linear-gradient(180deg,#e8a89c 0%,#d88070 45%,#c43c24 55%,#d06048 100%);"></div>
<div style="position:absolute;left:1060px;top:277px;width:12px;height:19px;font:bold 15px/19px 'Liberation Sans',sans-serif;color:#fff;text-align:center;text-shadow:0 0 2px #234;">?</div>
<div style="position:absolute;left:1094px;top:277px;width:18px;height:19px;font:bold 15px/19px 'Liberation Sans',sans-serif;color:#fff;text-align:center;text-shadow:0 0 2px #411;">x</div>
<div style="position:absolute;left:567px;top:305px;width:560px;height:465px;box-sizing:border-box;border:1px solid #26324a;background:#f0f0f0;box-shadow:0 0 0 1px #a8c4ec;"><div style="position:absolute;left:0;top:0;right:0;bottom:0;border:1px solid #fff;border-right-color:#f8f8f8;"></div></div>
<div style="position:absolute;left:577.5px;top:324.29px;font-size:11.5px;line-height:12.92px;color:#000;white-space:nowrap;letter-spacing:-0.450px;">Component <u>R</u>eference:</div>
<div style="position:absolute;left:577.5px;top:347.29px;font-size:11.5px;line-height:12.92px;color:#000;white-space:nowrap;letter-spacing:-0.450px;">Component <u>V</u>alue:</div>
<div style="position:absolute;left:577.5px;top:382.09px;font-size:11.5px;line-height:12.92px;color:#000;white-space:nowrap;letter-spacing:-0.450px;">PCB Package:</div>
<div style="position:absolute;left:577.5px;top:406.09px;font-size:11.5px;line-height:12.92px;color:#000;white-space:nowrap;letter-spacing:-0.450px;">Program File:</div>
<div style="position:absolute;left:577.5px;top:429.89px;font-size:11.5px;line-height:12.92px;color:#000;white-space:nowrap;letter-spacing:-0.450px;">CKOPT (Oscillator Options)</div>
<div style="position:absolute;left:577.5px;top:453.89px;font-size:11.5px;line-height:12.92px;color:#000;white-space:nowrap;letter-spacing:-0.450px;">BOOTRST (Select Reset Vector)</div>
<div style="position:absolute;left:577.5px;top:477.89px;font-size:11.5px;line-height:12.92px;color:#000;white-space:nowrap;letter-spacing:-0.450px;">CKSEL Fuses:</div>
<div style="position:absolute;left:577.5px;top:501.89px;font-size:11.5px;line-height:12.92px;color:#000;white-space:nowrap;letter-spacing:-0.450px;">Boot Loader Size:</div>
<div style="position:absolute;left:577.5px;top:525.89px;font-size:11.5px;line-height:12.92px;color:#000;white-space:nowrap;letter-spacing:-0.450px;">SUT Fuses:</div>
<div style="position:absolute;left:577.5px;top:549.19px;font-size:11.5px;line-height:12.92px;color:#000;white-space:nowrap;letter-spacing:-0.450px;">Advanced Properties:</div>
<div style="position:absolute;left:577.5px;top:603.59px;font-size:11.5px;line-height:12.92px;color:#000;white-space:nowrap;letter-spacing:-0.450px;">Other <u>P</u>roperties:</div>
<div style="position:absolute;left:764px;top:320px;width:173px;height:19px;box-sizing:border-box;background:#fff;border-top:1px solid #a0a0a0;border-left:1px solid #a0a0a0;border-right:1px solid #fff;border-bottom:1px solid #fff;"><div style="position:absolute;left:0;top:0;right:0;bottom:0;border-top:1px solid #696969;border-left:1px solid #696969;border-right:1px solid #e3e3e3;border-bottom:1px solid #e3e3e3;"></div></div>
<div style="position:absolute;left:767px;top:323.89px;font-size:11.5px;line-height:12.92px;color:#000;white-space:nowrap;letter-spacing:-0.450px;">U1</div>
<div style="position:absolute;left:764px;top:343px;width:173px;height:19px;box-sizing:border-box;background:#fff;border-top:1px solid #a0a0a0;border-left:1px solid #a0a0a0;border-right:1px solid #fff;border-bottom:1px solid #fff;"><div style="position:absolute;left:0;top:0;right:0;bottom:0;border-top:1px solid #696969;border-left:1px solid #696969;border-right:1px solid #e3e3e3;border-bottom:1px solid #e3e3e3;"></div></div>
<div style="position:absolute;left:767px;top:346.89px;font-size:11.5px;line-height:12.92px;color:#000;white-space:nowrap;letter-spacing:-0.450px;">ATMEGA16</div>
<div style="position:absolute;left:967.5px;top:324.19px;font-size:11.5px;line-height:12.92px;color:#000;white-space:nowrap;letter-spacing:-0.450px;">Hidden:</div>
<div style="position:absolute;left:967.5px;top:345.59px;font-size:11.5px;line-height:12.92px;color:#000;white-space:nowrap;letter-spacing:-0.450px;">Hidden:</div>
<div style="position:absolute;left:1011px;top:324px;width:12px;height:12px;box-sizing:border-box;border:1px solid;border-color:#9c9c9c #d8d8d8 #d8d8d8 #9c9c9c;background:#fff;"></div>
<div style="position:absolute;left:1011px;top:346px;width:12px;height:12px;box-sizing:border-box;border:1px solid;border-color:#9c9c9c #d8d8d8 #d8d8d8 #9c9c9c;background:#fff;"></div>
<div style="position:absolute;left:764px;top:376px;width:152px;height:20px;box-sizing:border-box;background:#fff;border-top:1px solid #a0a0a0;border-left:1px solid #a0a0a0;border-right:1px solid #fff;border-bottom:1px solid #fff;"><div style="position:absolute;left:0;top:0;right:0;bottom:0;border-top:1px solid #696969;border-left:1px solid #696969;border-right:1px solid #e3e3e3;border-bottom:1px solid #e3e3e3;"></div></div>
<div style="position:absolute;left:897px;top:378px;width:17px;height:16px;box-sizing:border-box;background:#f0f0f0;border-top:1px solid #e3e3e3;border-left:1px solid #e3e3e3;border-right:1px solid #696969;border-bottom:1px solid #696969;"><div style="position:absolute;left:0;top:0;right:0;bottom:0;border-top:1px solid #fff;border-left:1px solid #fff;border-right:1px solid #a0a0a0;border-bottom:1px solid #a0a0a0;"></div><div style="position:absolute;left:5px;top:6px;width:0;height:0;border-left:3.5px solid transparent;border-right:3.5px solid transparent;border-top:4px solid #000;"></div></div>
<div style="position:absolute;left:768px;top:379.59px;font-size:11.5px;line-height:12.92px;color:#000;white-space:nowrap;letter-spacing:-0.450px;">DIL40</div>
<div style="position:absolute;left:919px;top:376px;width:19px;height:20px;box-sizing:border-box;background:#f0f0f0;border:1px solid #000;"><div style="position:absolute;left:0;top:0;right:0;bottom:0;border-top:1px solid #fff;border-left:1px solid #fff;border-right:1px solid #a0a0a0;border-bottom:1px solid #a0a0a0;"></div></div>
<div style="position:absolute;left:925.52734375px;top:380.59px;font-size:11.5px;line-height:12.92px;color:#000;white-space:nowrap;letter-spacing:-0.450px;">?</div>
<div style="position:absolute;left:764px;top:400px;width:152px;height:20px;box-sizing:border-box;background:#fff;border-top:1px solid #a0a0a0;border-left:1px solid #a0a0a0;border-right:1px solid #fff;border-bottom:1px solid #fff;"><div style="position:absolute;left:0;top:0;right:0;bottom:0;border-top:1px solid #696969;border-left:1px solid #696969;border-right:1px solid #e3e3e3;border-bottom:1px solid #e3e3e3;"></div></div>
<div style="position:absolute;left:919px;top:400px;width:19px;height:20px;box-sizing:border-box;background:#f0f0f0;border:1px solid #000;"><div style="position:absolute;left:0;top:0;right:0;bottom:0;border-top:1px solid #fff;border-left:1px solid #fff;border-right:1px solid #a0a0a0;border-bottom:1px solid #a0a0a0;"></div></div>
<div style="position:absolute;left:922px;top:404px;width:13px;height:11px;"><div style="position:absolute;left:0;top:0;width:6px;height:3px;background:#f0e080;border:1px solid #8a7a20;border-bottom:none;"></div><div style="position:absolute;left:0;top:2px;width:12px;height:8px;background:#f2e68a;border:1px solid #6a5a10;"></div><div style="position:absolute;left:2px;top:5px;width:11px;height:6px;background:#e0d060;border-bottom:1px solid #222;border-right:1px solid #222;"></div></div>
<div style="position:absolute;left:764px;top:424px;width:173px;height:20px;box-sizing:border-box;background:#fff;border-top:1px solid #a0a0a0;border-left:1px solid #a0a0a0;border-right:1px solid #fff;border-bottom:1px solid #fff;"><div style="position:absolute;left:0;top:0;right:0;bottom:0;border-top:1px solid #696969;border-left:1px solid #696969;border-right:1px solid #e3e3e3;border-bottom:1px solid #e3e3e3;"></div></div>
<div style="position:absolute;left:918px;top:426px;width:17px;height:16px;box-sizing:border-box;background:#f0f0f0;border-top:1px solid #e3e3e3;border-left:1px solid #e3e3e3;border-right:1px solid #696969;border-bottom:1px solid #696969;"><div style="position:absolute;left:0;top:0;right:0;bottom:0;border-top:1px solid #fff;border-left:1px solid #fff;border-right:1px solid #a0a0a0;border-bottom:1px solid #a0a0a0;"></div><div style="position:absolute;left:5px;top:6px;width:0;height:0;border-left:3.5px solid transparent;border-right:3.5px solid transparent;border-top:4px solid #000;"></div></div>
<div style="position:absolute;left:768px;top:427.59px;font-size:11.5px;line-height:12.92px;color:#000;white-space:nowrap;letter-spacing:-0.450px;">(0) Programmed</div>
<div style="position:absolute;left:764px;top:448px;width:173px;height:20px;box-sizing:border-box;background:#fff;border-top:1px solid #a0a0a0;border-left:1px solid #a0a0a0;border-right:1px solid #fff;border-bottom:1px solid #fff;"><div style="position:absolute;left:0;top:0;right:0;bottom:0;border-top:1px solid #696969;border-left:1px solid #696969;border-right:1px solid #e3e3e3;border-bottom:1px solid #e3e3e3;"></div></div>
<div style="position:absolute;left:918px;top:450px;width:17px;height:16px;box-sizing:border-box;background:#f0f0f0;border-top:1px solid #e3e3e3;border-left:1px solid #e3e3e3;border-right:1px solid #696969;border-bottom:1px solid #696969;"><div style="position:absolute;left:0;top:0;right:0;bottom:0;border-top:1px solid #fff;border-left:1px solid #fff;border-right:1px solid #a0a0a0;border-bottom:1px solid #a0a0a0;"></div><div style="position:absolute;left:5px;top:6px;width:0;height:0;border-left:3.5px solid transparent;border-right:3.5px solid transparent;border-top:4px solid #000;"></div></div>
<div style="position:absolute;left:768px;top:451.59px;font-size:11.5px;line-height:12.92px;color:#000;white-space:nowrap;letter-spacing:-0.450px;">(1) Unprogrammed</div>
<div style="position:absolute;left:764px;top:472px;width:173px;height:20px;box-sizing:border-box;background:#fff;border-top:1px solid #a0a0a0;border-left:1px solid #a0a0a0;border-right:1px solid #fff;border-bottom:1px solid #fff;"><div style="position:absolute;left:0;top:0;right:0;bottom:0;border-top:1px solid #696969;border-left:1px solid #696969;border-right:1px solid #e3e3e3;border-bottom:1px solid #e3e3e3;"></div></div>
<div style="position:absolute;left:918px;top:474px;width:17px;height:16px;box-sizing:border-box;background:#f0f0f0;border-top:1px solid #e3e3e3;border-left:1px solid #e3e3e3;border-right:1px solid #696969;border-bottom:1px solid #696969;"><div style="position:absolute;left:0;top:0;right:0;bottom:0;border-top:1px solid #fff;border-left:1px solid #fff;border-right:1px solid #a0a0a0;border-bottom:1px solid #a0a0a0;"></div><div style="position:absolute;left:5px;top:6px;width:0;height:0;border-left:3.5px solid transparent;border-right:3.5px solid transparent;border-top:4px solid #000;"></div></div>
<div style="position:absolute;left:768px;top:475.59px;font-size:11.5px;line-height:12.92px;color:#000;white-space:nowrap;letter-spacing:-0.450px;">(0000) Ext.Clock</div>
<div style="position:absolute;left:764px;top:496px;width:173px;height:20px;box-sizing:border-box;background:#fff;border-top:1px solid #a0a0a0;border-left:1px solid #a0a0a0;border-right:1px solid #fff;border-bottom:1px solid #fff;"><div style="position:absolute;left:0;top:0;right:0;bottom:0;border-top:1px solid #696969;border-left:1px solid #696969;border-right:1px solid #e3e3e3;border-bottom:1px solid #e3e3e3;"></div></div>
<div style="position:absolute;left:766px;top:498px;width:150px;height:16px;overflow:hidden;">
<div style="position:absolute;left:2px;top:1.89px;font-size:11.5px;line-height:12.92px;color:#000;white-space:nowrap;letter-spacing:-0.450px;">(00) 1024 words. Starts at 0x1C00</div>
</div>
<div style="position:absolute;left:918px;top:498px;width:17px;height:16px;box-sizing:border-box;background:#f0f0f0;border-top:1px solid #e3e3e3;border-left:1px solid #e3e3e3;border-right:1px solid #696969;border-bottom:1px solid #696969;"><div style="position:absolute;left:0;top:0;right:0;bottom:0;border-top:1px solid #fff;border-left:1px solid #fff;border-right:1px solid #a0a0a0;border-bottom:1px solid #a0a0a0;"></div><div style="position:absolute;left:5px;top:6px;width:0;height:0;border-left:3.5px solid transparent;border-right:3.5px solid transparent;border-top:4px solid #000;"></div></div>
<div style="position:absolute;left:764px;top:520px;width:173px;height:20px;box-sizing:border-box;background:#fff;border-top:1px solid #a0a0a0;border-left:1px solid #a0a0a0;border-right:1px solid #fff;border-bottom:1px solid #fff;"><div style="position:absolute;left:0;top:0;right:0;bottom:0;border-top:1px solid #696969;border-left:1px solid #696969;border-right:1px solid #e3e3e3;border-bottom:1px solid #e3e3e3;"></div></div>
<div style="position:absolute;left:918px;top:522px;width:17px;height:16px;box-sizing:border-box;background:#f0f0f0;border-top:1px solid #e3e3e3;border-left:1px solid #e3e3e3;border-right:1px solid #696969;border-bottom:1px solid #696969;"><div style="position:absolute;left:0;top:0;right:0;bottom:0;border-top:1px solid #fff;border-left:1px solid #fff;border-right:1px solid #a0a0a0;border-bottom:1px solid #a0a0a0;"></div><div style="position:absolute;left:5px;top:6px;width:0;height:0;border-left:3.5px solid transparent;border-right:3.5px solid transparent;border-top:4px solid #000;"></div></div>
<div style="position:absolute;left:768px;top:523.59px;font-size:11.5px;line-height:12.92px;color:#000;white-space:nowrap;letter-spacing:-0.450px;">(00)</div>
<div style="position:absolute;left:942px;top:376px;width:81px;height:20px;box-sizing:border-box;background:#fff;border-top:1px solid #a0a0a0;border-left:1px solid #a0a0a0;border-right:1px solid #fff;border-bottom:1px solid #fff;"><div style="position:absolute;left:0;top:0;right:0;bottom:0;border-top:1px solid #696969;border-left:1px solid #696969;border-right:1px solid #e3e3e3;border-bottom:1px solid #e3e3e3;"></div></div>
<div style="position:absolute;left:1004px;top:378px;width:17px;height:16px;box-sizing:border-box;background:#f0f0f0;border-top:1px solid #e3e3e3;border-left:1px solid #e3e3e3;border-right:1px solid #696969;border-bottom:1px solid #696969;"><div style="position:absolute;left:0;top:0;right:0;bottom:0;border-top:1px solid #fff;border-left:1px solid #fff;border-right:1px solid #a0a0a0;border-bottom:1px solid #a0a0a0;"></div><div style="position:absolute;left:5px;top:6px;width:0;height:0;border-left:3.5px solid transparent;border-right:3.5px solid transparent;border-top:4px solid #000;"></div></div>
<div style="position:absolute;left:946px;top:379.59px;font-size:11.5px;line-height:12.92px;color:#000;white-space:nowrap;letter-spacing:-0.450px;">Hide All</div>
<div style="position:absolute;left:942px;top:400px;width:81px;height:20px;box-sizing:border-box;background:#fff;border-top:1px solid #a0a0a0;border-left:1px solid #a0a0a0;border-right:1px solid #fff;border-bottom:1px solid #fff;"><div style="position:absolute;left:0;top:0;right:0;bottom:0;border-top:1px solid #696969;border-left:1px solid #696969;border-right:1px solid #e3e3e3;border-bottom:1px solid #e3e3e3;"></div></div>
<div style="position:absolute;left:1004px;top:402px;width:17px;height:16px;box-sizing:border-box;background:#f0f0f0;border-top:1px solid #e3e3e3;border-left:1px solid #e3e3e3;border-right:1px solid #696969;border-bottom:1px solid #696969;"><div style="position:absolute;left:0;top:0;right:0;bottom:0;border-top:1px solid #fff;border-left:1px solid #fff;border-right:1px solid #a0a0a0;border-bottom:1px solid #a0a0a0;"></div><div style="position:absolute;left:5px;top:6px;width:0;height:0;border-left:3.5px solid transparent;border-right:3.5px solid transparent;border-top:4px solid #000;"></div></div>
<div style="position:absolute;left:946px;top:403.59px;font-size:11.5px;line-height:12.92px;color:#000;white-space:nowrap;letter-spacing:-0.450px;">Hide All</div>
<div style="position:absolute;left:942px;top:424px;width:81px;height:20px;box-sizing:border-box;background:#fff;border-top:1px solid #a0a0a0;border-left:1px solid #a0a0a0;border-right:1px solid #fff;border-bottom:1px solid #fff;"><div style="position:absolute;left:0;top:0;right:0;bottom:0;border-top:1px solid #696969;border-left:1px solid #696969;border-right:1px solid #e3e3e3;border-bottom:1px solid #e3e3e3;"></div></div>
<div style="position:absolute;left:1004px;top:426px;width:17px;height:16px;box-sizing:border-box;background:#f0f0f0;border-top:1px solid #e3e3e3;border-left:1px solid #e3e3e3;border-right:1px solid #696969;border-bottom:1px solid #696969;"><div style="position:absolute;left:0;top:0;right:0;bottom:0;border-top:1px solid #fff;border-left:1px solid #fff;border-right:1px solid #a0a0a0;border-bottom:1px solid #a0a0a0;"></div><div style="position:absolute;left:5px;top:6px;width:0;height:0;border-left:3.5px solid transparent;border-right:3.5px solid transparent;border-top:4px solid #000;"></div></div>
<div style="position:absolute;left:946px;top:427.59px;font-size:11.5px;line-height:12.92px;color:#000;white-space:nowrap;letter-spacing:-0.450px;">Hide All</div>
<div style="position:absolute;left:942px;top:448px;width:81px;height:20px;box-sizing:border-box;background:#fff;border-top:1px solid #a0a0a0;border-left:1px solid #a0a0a0;border-right:1px solid #fff;border-bottom:1px solid #fff;"><div style="position:absolute;left:0;top:0;right:0;bottom:0;border-top:1px solid #696969;border-left:1px solid #696969;border-right:1px solid #e3e3e3;border-bottom:1px solid #e3e3e3;"></div></div>
<div style="position:absolute;left:1004px;top:450px;width:17px;height:16px;box-sizing:border-box;background:#f0f0f0;border-top:1px solid #e3e3e3;border-left:1px solid #e3e3e3;border-right:1px solid #696969;border-bottom:1px solid #696969;"><div style="position:absolute;left:0;top:0;right:0;bottom:0;border-top:1px solid #fff;border-left:1px solid #fff;border-right:1px solid #a0a0a0;border-bottom:1px solid #a0a0a0;"></div><div style="position:absolute;left:5px;top:6px;width:0;height:0;border-left:3.5px solid transparent;border-right:3.5px solid transparent;border-top:4px solid #000;"></div></div>
<div style="position:absolute;left:946px;top:451.59px;font-size:11.5px;line-height:12.92px;color:#000;white-space:nowrap;letter-spacing:-0.450px;">Hide All</div>
<div style="position:absolute;left:942px;top:472px;width:81px;height:20px;box-sizing:border-box;background:#fff;border-top:1px solid #a0a0a0;border-left:1px solid #a0a0a0;border-right:1px solid #fff;border-bottom:1px solid #fff;"><div style="position:absolute;left:0;top:0;right:0;bottom:0;border-top:1px solid #696969;border-left:1px solid #696969;border-right:1px solid #e3e3e3;border-bottom:1px solid #e3e3e3;"></div></div>
<div style="position:absolute;left:1004px;top:474px;width:17px;height:16px;box-sizing:border-box;background:#f0f0f0;border-top:1px solid #e3e3e3;border-left:1px solid #e3e3e3;border-right:1px solid #696969;border-bottom:1px solid #696969;"><div style="position:absolute;left:0;top:0;right:0;bottom:0;border-top:1px solid #fff;border-left:1px solid #fff;border-right:1px solid #a0a0a0;border-bottom:1px solid #a0a0a0;"></div><div style="position:absolute;left:5px;top:6px;width:0;height:0;border-left:3.5px solid transparent;border-right:3.5px solid transparent;border-top:4px solid #000;"></div></div>
<div style="position:absolute;left:946px;top:475.59px;font-size:11.5px;line-height:12.92px;color:#000;white-space:nowrap;letter-spacing:-0.450px;">Hide All</div>
<div style="position:absolute;left:942px;top:496px;width:81px;height:20px;box-sizing:border-box;background:#fff;border-top:1px solid #a0a0a0;border-left:1px solid #a0a0a0;border-right:1px solid #fff;border-bottom:1px solid #fff;"><div style="position:absolute;left:0;top:0;right:0;bottom:0;border-top:1px solid #696969;border-left:1px solid #696969;border-right:1px solid #e3e3e3;border-bottom:1px solid #e3e3e3;"></div></div>
<div style="position:absolute;left:1004px;top:498px;width:17px;height:16px;box-sizing:border-box;background:#f0f0f0;border-top:1px solid #e3e3e3;border-left:1px solid #e3e3e3;border-right:1px solid #696969;border-bottom:1px solid #696969;"><div style="position:absolute;left:0;top:0;right:0;bottom:0;border-top:1px solid #fff;border-left:1px solid #fff;border-right:1px solid #a0a0a0;border-bottom:1px solid #a0a0a0;"></div><div style="position:absolute;left:5px;top:6px;width:0;height:0;border-left:3.5px solid transparent;border-right:3.5px solid transparent;border-top:4px solid #000;"></div></div>
<div style="position:absolute;left:946px;top:499.59px;font-size:11.5px;line-height:12.92px;color:#000;white-space:nowrap;letter-spacing:-0.450px;">Hide All</div>
<div style="position:absolute;left:942px;top:520px;width:81px;height:20px;box-sizing:border-box;background:#fff;border-top:1px solid #a0a0a0;border-left:1px solid #a0a0a0;border-right:1px solid #fff;border-bottom:1px solid #fff;"><div style="position:absolute;left:0;top:0;right:0;bottom:0;border-top:1px solid #696969;border-left:1px solid #696969;border-right:1px solid #e3e3e3;border-bottom:1px solid #e3e3e3;"></div></div>
<div style="position:absolute;left:1004px;top:522px;width:17px;height:16px;box-sizing:border-box;background:#f0f0f0;border-top:1px solid #e3e3e3;border-left:1px solid #e3e3e3;border-right:1px solid #696969;border-bottom:1px solid #696969;"><div style="position:absolute;left:0;top:0;right:0;bottom:0;border-top:1px solid #fff;border-left:1px solid #fff;border-right:1px solid #a0a0a0;border-bottom:1px solid #a0a0a0;"></div><div style="position:absolute;left:5px;top:6px;width:0;height:0;border-left:3.5px solid transparent;border-right:3.5px solid transparent;border-top:4px solid #000;"></div></div>
<div style="position:absolute;left:946px;top:523.59px;font-size:11.5px;line-height:12.92px;color:#000;white-space:nowrap;letter-spacing:-0.450px;">Hide All</div>
<div style="position:absolute;left:942px;top:565px;width:81px;height:20px;box-sizing:border-box;background:#fff;border-top:1px solid #a0a0a0;border-left:1px solid #a0a0a0;border-right:1px solid #fff;border-bottom:1px solid #fff;"><div style="position:absolute;left:0;top:0;right:0;bottom:0;border-top:1px solid #696969;border-left:1px solid #696969;border-right:1px solid #e3e3e3;border-bottom:1px solid #e3e3e3;"></div></div>
<div style="position:absolute;left:1004px;top:567px;width:17px;height:16px;box-sizing:border-box;background:#f0f0f0;border-top:1px solid #e3e3e3;border-left:1px solid #e3e3e3;border-right:1px solid #696969;border-bottom:1px solid #696969;"><div style="position:absolute;left:0;top:0;right:0;bottom:0;border-top:1px solid #fff;border-left:1px solid #fff;border-right:1px solid #a0a0a0;border-bottom:1px solid #a0a0a0;"></div><div style="position:absolute;left:5px;top:6px;width:0;height:0;border-left:3.5px solid transparent;border-right:3.5px solid transparent;border-top:4px solid #000;"></div></div>
<div style="position:absolute;left:946px;top:568.59px;font-size:11.5px;line-height:12.92px;color:#000;white-space:nowrap;letter-spacing:-0.450px;">Hide All</div>
<div style="position:absolute;left:577px;top:565px;width:184px;height:20px;box-sizing:border-box;background:#fff;border-top:1px solid #a0a0a0;border-left:1px solid #a0a0a0;border-right:1px solid #fff;border-bottom:1px solid #fff;"><div style="position:absolute;left:0;top:0;right:0;bottom:0;border-top:1px solid #696969;border-left:1px solid #696969;border-right:1px solid #e3e3e3;border-bottom:1px solid #e3e3e3;"></div></div>
<div style="position:absolute;left:742px;top:567px;width:17px;height:16px;box-sizing:border-box;background:#f0f0f0;border-top:1px solid #e3e3e3;border-left:1px solid #e3e3e3;border-right:1px solid #696969;border-bottom:1px solid #696969;"><div style="position:absolute;left:0;top:0;right:0;bottom:0;border-top:1px solid #fff;border-left:1px solid #fff;border-right:1px solid #a0a0a0;border-bottom:1px solid #a0a0a0;"></div><div style="position:absolute;left:5px;top:6px;width:0;height:0;border-left:3.5px solid transparent;border-right:3.5px solid transparent;border-top:4px solid #000;"></div></div>
<div style="position:absolute;left:581px;top:568.59px;font-size:11.5px;line-height:12.92px;color:#000;white-space:nowrap;letter-spacing:-0.450px;">Clock Frequency</div>
<div style="position:absolute;left:764px;top:565px;width:173px;height:20px;box-sizing:border-box;background:#fff;border-top:1px solid #a0a0a0;border-left:1px solid #a0a0a0;border-right:1px solid #fff;border-bottom:1px solid #fff;"><div style="position:absolute;left:0;top:0;right:0;bottom:0;border-top:1px solid #696969;border-left:1px solid #696969;border-right:1px solid #e3e3e3;border-bottom:1px solid #e3e3e3;"></div></div>
<div style="position:absolute;left:767px;top:568.89px;font-size:11.5px;line-height:12.92px;color:#000;white-space:nowrap;letter-spacing:-0.450px;">(Default)</div>
<div style="position:absolute;left:576px;top:619px;width:445px;height:81px;box-sizing:border-box;background:#fff;border-top:1px solid #a0a0a0;border-left:1px solid #a0a0a0;border-right:1px solid #fff;border-bottom:1px solid #fff;"><div style="position:absolute;left:0;top:0;right:0;bottom:0;border-top:1px solid #696969;border-left:1px solid #696969;border-right:1px solid #e3e3e3;border-bottom:1px solid #e3e3e3;"></div></div>
<div style="position:absolute;left:1003px;top:621px;width:16px;height:77px;background:#f0f0f0;"></div>
<div style="position:absolute;left:1007px;top:628px;width:0;height:0;border-left:4px solid transparent;border-right:4px solid transparent;border-bottom:4px solid #a0a0a0;"></div>
<div style="position:absolute;left:1007px;top:687px;width:0;height:0;border-left:4px solid transparent;border-right:4px solid transparent;border-top:4px solid #a0a0a0;"></div>
<div style="position:absolute;left:575px;top:713px;width:12px;height:12px;box-sizing:border-box;border:1px solid;border-color:#9c9c9c #d8d8d8 #d8d8d8 #9c9c9c;background:#fff;"></div>
<div style="position:absolute;left:592px;top:712.79px;font-size:11.5px;line-height:12.92px;color:#000;white-space:nowrap;letter-spacing:-0.450px;">Exclude from <u>S</u>imulation</div>
<div style="position:absolute;left:575px;top:730px;width:12px;height:12px;box-sizing:border-box;border:1px solid;border-color:#9c9c9c #d8d8d8 #d8d8d8 #9c9c9c;background:#fff;"></div>
<div style="position:absolute;left:592px;top:729.79px;font-size:11.5px;line-height:12.92px;color:#000;white-space:nowrap;letter-spacing:-0.450px;">Exclude from PCB <u>L</u>ayout</div>
<div style="position:absolute;left:575px;top:747px;width:12px;height:12px;box-sizing:border-box;border:1px solid;border-color:#9c9c9c #d8d8d8 #d8d8d8 #9c9c9c;background:#fff;"></div>
<div style="position:absolute;left:592px;top:746.79px;font-size:11.5px;line-height:12.92px;color:#000;white-space:nowrap;letter-spacing:-0.450px;">Edit <u>a</u>ll properties as text</div>
<div style="position:absolute;left:777px;top:713px;width:12px;height:12px;box-sizing:border-box;border:1px solid;border-color:#9c9c9c #d8d8d8 #d8d8d8 #9c9c9c;background:#fff;"></div>
<div style="position:absolute;left:792.5px;top:712.79px;font-size:11.5px;line-height:12.92px;color:#000;white-space:nowrap;letter-spacing:-0.450px;">Attach hierarchy <u>m</u>odule</div>
<div style="position:absolute;left:777px;top:730px;width:12px;height:12px;box-sizing:border-box;border:1px solid;border-color:#c8c8c8 #e6e6e6 #e6e6e6 #c8c8c8;background:#f4f4f4;"></div>
<div style="position:absolute;left:792.5px;top:729.79px;font-size:11.5px;line-height:12.92px;color:#a0a0a0;white-space:nowrap;letter-spacing:-0.450px;">Hide <u>c</u>ommon pins</div>
<div style="position:absolute;left:1033px;top:320px;width:1px;height:441px;background:#000;"></div>
<div style="position:absolute;left:1034px;top:320px;width:1px;height:441px;background:#fff;"></div>
<div style="position:absolute;left:1040px;top:320px;width:79px;height:24px;box-sizing:border-box;background:#f0f0f0;border:1px solid #000;"><div style="position:absolute;left:0;top:0;right:0;bottom:0;border-top:1px solid #fff;border-left:1px solid #fff;border-right:1px solid #a0a0a0;border-bottom:1px solid #a0a0a0;"></div></div>
<div style="position:absolute;left:1071.6421875px;top:325.59px;font-size:11.5px;line-height:12.92px;color:#000;white-space:nowrap;letter-spacing:-0.450px;"><u>O</u>K</div>
<div style="position:absolute;left:1040px;top:348px;width:79px;height:24px;box-sizing:border-box;background:#f0f0f0;border:1px solid #000;"><div style="position:absolute;left:0;top:0;right:0;bottom:0;border-top:1px solid #fff;border-left:1px solid #fff;border-right:1px solid #a0a0a0;border-bottom:1px solid #a0a0a0;"></div></div>
<div style="position:absolute;left:1068.575px;top:353.59px;font-size:11.5px;line-height:12.92px;color:#000;white-space:nowrap;letter-spacing:-0.450px;"><u>H</u>elp</div>
<div style="position:absolute;left:1040px;top:376px;width:79px;height:24px;box-sizing:border-box;background:#f0f0f0;border:1px solid #000;"><div style="position:absolute;left:0;top:0;right:0;bottom:0;border-top:1px solid #fff;border-left:1px solid #fff;border-right:1px solid #a0a0a0;border-bottom:1px solid #a0a0a0;"></div></div>
<div style="position:absolute;left:1068.2546875px;top:381.59px;font-size:11.5px;line-height:12.92px;color:#000;white-space:nowrap;letter-spacing:-0.450px;"><u>D</u>ata</div>
<div style="position:absolute;left:1040px;top:404px;width:79px;height:24px;box-sizing:border-box;background:#f0f0f0;border:1px solid #000;"><div style="position:absolute;left:0;top:0;right:0;bottom:0;border-top:1px solid #fff;border-left:1px solid #fff;border-right:1px solid #a0a0a0;border-bottom:1px solid #a0a0a0;"></div></div>
<div style="position:absolute;left:1050.971875px;top:409.59px;font-size:11.5px;line-height:12.92px;color:#000;white-space:nowrap;letter-spacing:-0.450px;">Hidden <u>P</u>ins</div>
<div style="position:absolute;left:1040px;top:436px;width:79px;height:24px;box-sizing:border-box;background:#f0f0f0;border:1px solid #000;"><div style="position:absolute;left:0;top:0;right:0;bottom:0;border-top:1px solid #fff;border-left:1px solid #fff;border-right:1px solid #a0a0a0;border-bottom:1px solid #a0a0a0;"></div></div>
<div style="position:absolute;left:1062.95234375px;top:441.59px;font-size:11.5px;line-height:12.92px;color:#000;white-space:nowrap;letter-spacing:-0.450px;"><u>C</u>ancel</div>
<svg width="1199" height="791" style="position:absolute;left:0;top:0">
<polygon points="796.4,575.2 793.9,580.8 791.1,590.2 788.3,602.4 784.4,606.9 780,601.3 778,601.8 767.9,611.9 764.1,621.4 757.1,632.1 745.1,643.5 741.3,639.1 753.3,627.1 755.9,620.1 763.4,609.4 770.4,598.5 769.4,596.9 765.6,596.9 765,591.9 762.8,590.2 773.3,586.3 781.1,582.4 788.3,579.1" fill="#f40000" stroke="#f40000" stroke-width="0.8" stroke-linejoin="round"/>
<path d="M777,586 L781,584 M774,595 L776,594 M782,593 L783,592 M760,623 L762,620 M750,634 L752,632 M786,589 L787,588" stroke="#ff9a9a" stroke-width="0.9" fill="none"/>
</svg>
</body></html>
